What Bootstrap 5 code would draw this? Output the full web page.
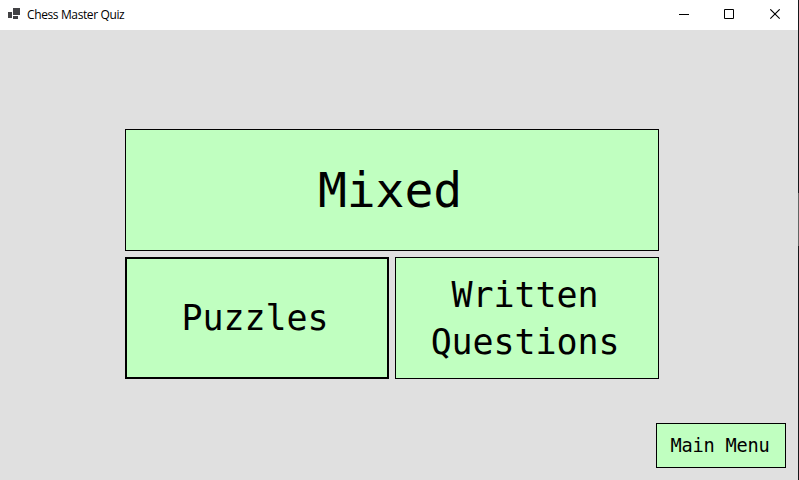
<!DOCTYPE html>
<html lang="en">
<head>
<meta charset="utf-8">
<meta name="viewport" content="width=device-width, initial-scale=1">
<title>Chess Master Quiz</title>
<link href="https://cdn.jsdelivr.net/npm/bootstrap@5.3.0/dist/css/bootstrap.min.css" rel="stylesheet">
<style>
  body { color: #000; padding-right: 1px; height: 480px; overflow: hidden;
    background: linear-gradient(#15181b 193px, #606462 193px, #606462 246px, #15181b 246px) right top / 1px 100% no-repeat #e0e0e0; }
  .title-bar { height: 30px; font: 12px/30px "Open Sans", "Noto Sans", sans-serif; }
  .title-text { letter-spacing: -.38px; margin-left: 7px; }
  .app-icon { margin: 0 0 2px 8px; }
  .win-btn { width: 45px; height: 30px; background: none; border: 0; padding: 0; color: #000; }
  .quiz-area { padding: 99px 0 0 125px; width: 659px; }
  .quiz-btn { --bs-btn-bg: #c0ffc0; --bs-btn-color: #000; --bs-btn-border-color: #000;
    --bs-btn-hover-bg: #b0f5b0; --bs-btn-hover-border-color: #000; --bs-btn-padding-x: 0; --bs-btn-padding-y: 0;
    --bs-btn-border-radius: 0; height: 122px; font-family: "DejaVu Sans Mono", monospace; }
  .mode-grid { gap: 6px; }
  .mixed { font-size: 48px; letter-spacing: -.1px; line-height: 64px; padding-right: 4px; }
  .half { font-size: 35px; line-height: 47px; letter-spacing: -.1px; padding-right: 4px; }
  .two-line { padding-top: 2px; }
  .chosen { border-width: 2px; }
  .menu-btn { width: 130px; height: 45px; font-size: 18.67px; letter-spacing: -.24px; line-height: 25px; padding-right: 2px; }
  .menu-row { padding: 44px 12px 0 0; }
</style>
<script src="https://cdn.jsdelivr.net/npm/bootstrap@5.3.0/dist/js/bootstrap.bundle.min.js"></script>
</head>
<body>
<header class="title-bar bg-white d-flex align-items-center">
  <svg class="app-icon" width="12" height="12" viewBox="0 0 12 12" fill="#424245" shape-rendering="crispEdges"><path d="M5 0h7v7H5zM0 4h4v6H0zM5 8h5v3H5z"/></svg>
  <span class="title-text">Chess Master Quiz</span>
  <div class="d-flex ms-auto">
    <button class="win-btn d-flex align-items-center justify-content-center" aria-label="Minimize"><svg width="13" height="12" shape-rendering="crispEdges"><path d="M0 5h10v1H0z"/></svg></button>
    <button class="win-btn d-flex align-items-center justify-content-center" aria-label="Maximize"><svg width="13" height="12"><path d="M.5.5h9v9h-9z" fill="none" stroke="#000"/></svg></button>
    <button class="win-btn d-flex align-items-center justify-content-center" aria-label="Close"><svg width="13" height="12"><path d="M1.3.3l9.4 9.4M10.7.3L1.3 9.7" stroke="#000" stroke-width="1.1"/></svg></button>
  </div>
</header>
<main>
  <div class="quiz-area">
    <div class="mode-grid d-flex flex-column">
      <button class="btn quiz-btn mixed w-100">Mixed</button>
      <div class="mode-grid d-flex">
        <button class="btn quiz-btn half chosen flex-fill w-50">Puzzles</button>
        <button class="btn quiz-btn half two-line flex-fill w-50">Written<br>Questions</button>
      </div>
    </div>
  </div>
  <div class="menu-row d-flex justify-content-end">
    <button class="btn quiz-btn menu-btn">Main Menu</button>
  </div>
</main>
</body>
</html>
